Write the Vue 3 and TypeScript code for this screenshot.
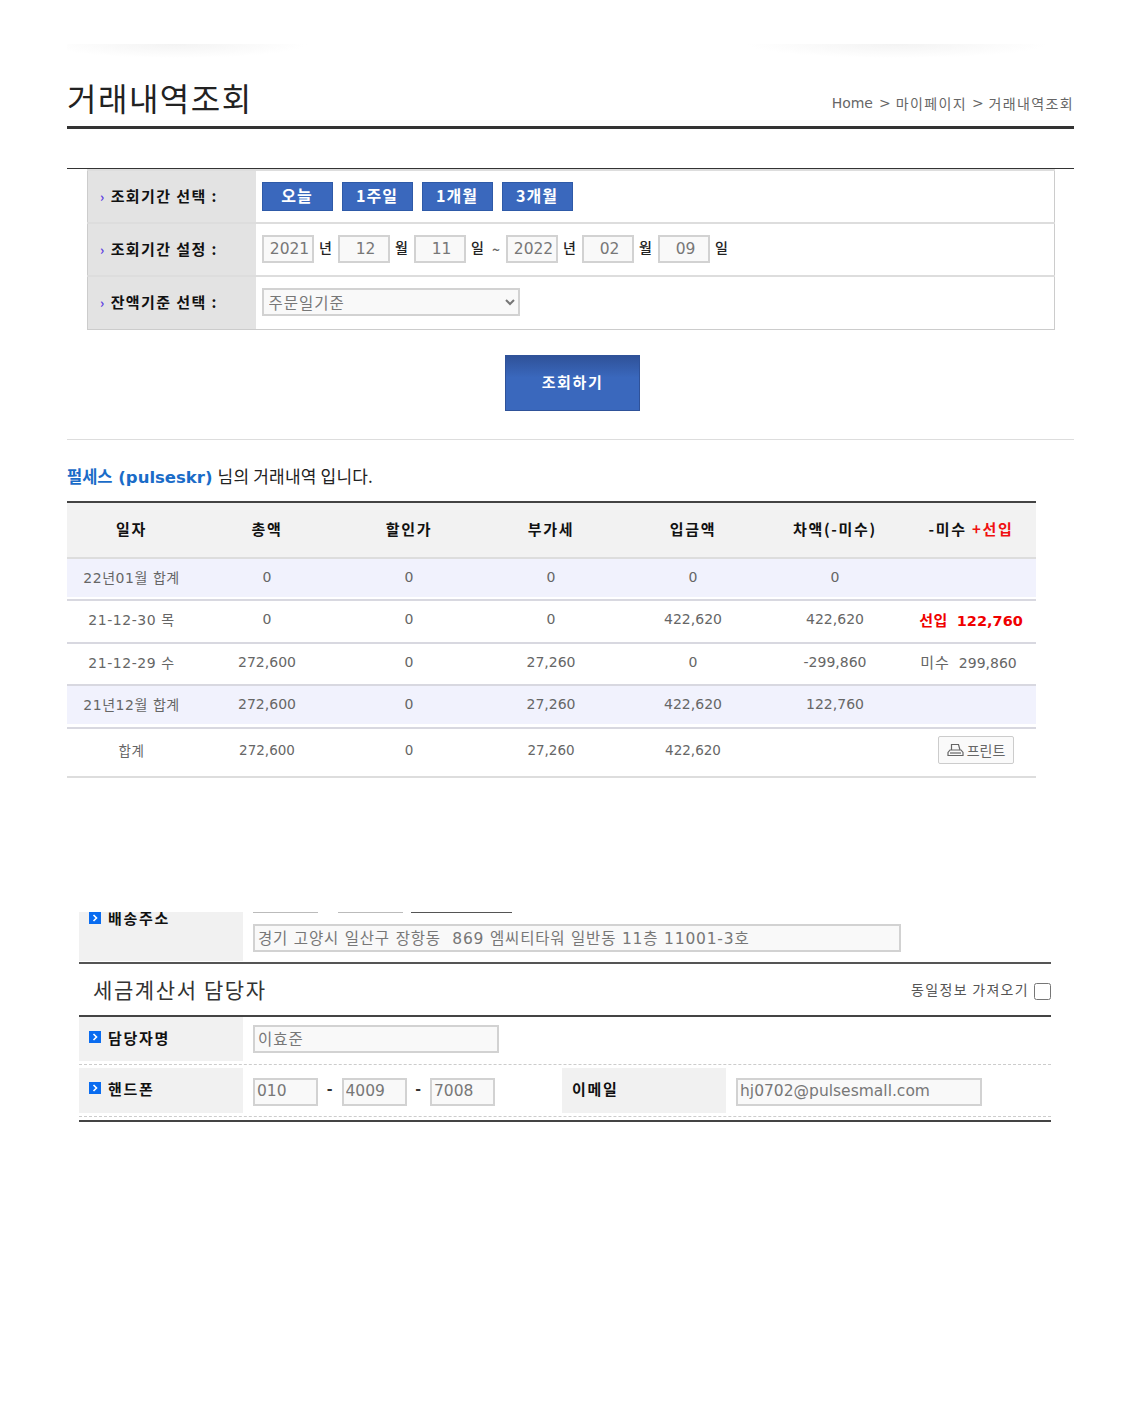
<script setup lang="ts">
interface Row {
  cells: string[];
  tint?: boolean;
  kind?: "adv" | "due" | "none" | "print";
  extra?: string;
}
const quick = ["오늘", "1주일", "1개월", "3개월"];
const heads = ["일자", "총액", "할인가", "부가세", "입금액", "차액(-미수)"];
const rows: Row[] = [
  { cells: ["22년01월 합계", "0", "0", "0", "0", "0"], tint: true, kind: "none" },
  { cells: ["21-12-30 목", "0", "0", "0", "422,620", "422,620"], kind: "adv", extra: "122,760" },
  { cells: ["21-12-29 수", "272,600", "0", "27,260", "0", "-299,860"], kind: "due", extra: "299,860" },
  { cells: ["21년12월 합계", "272,600", "0", "27,260", "422,620", "122,760"], tint: true, kind: "none" },
];
const totals = ["합계", "272,600", "0", "27,260", "422,620", ""];
</script>

<template>
  <div class="page">
    <div class="top-shadow"></div>
    <header class="head">
      <h1>거래내역조회</h1>
      <div class="crumb"><span>Home</span><i>&gt;</i><span>마이페이지</span><i>&gt;</i><span>거래내역조회</span></div>
    </header>

    <section class="search">
      <table class="form">
        <tr>
          <th><b class="arr">›</b>조회기간 선택 :</th>
          <td>
            <div class="quick"><button v-for="q in quick" :key="q" type="button">{{ q }}</button></div>
          </td>
        </tr>
        <tr>
          <th><b class="arr">›</b>조회기간 설정 :</th>
          <td>
            <div class="dates">
              <input class="d" value="2021" /><span>년</span>
              <input class="d" value="12" /><span>월</span>
              <input class="d" value="11" /><span>일</span><em>~</em>
              <input class="d" value="2022" /><span>년</span>
              <input class="d" value="02" /><span>월</span>
              <input class="d" value="09" /><span>일</span>
            </div>
          </td>
        </tr>
        <tr>
          <th><b class="arr">›</b>잔액기준 선택 :</th>
          <td>
            <select class="sel"><option>주문일기준</option></select>
          </td>
        </tr>
      </table>
      <div class="go"><button type="button">조회하기</button></div>
    </section>

    <p class="who"><strong>펄세스 (pulseskr)</strong> 님의 거래내역 입니다.</p>

    <table class="list">
      <colgroup>
        <col class="c1" /><col class="c2" /><col class="c2" /><col class="c2" /><col class="c2" /><col class="c2" /><col />
      </colgroup>
      <thead>
        <tr>
          <th v-for="h in heads" :key="h">{{ h }}</th>
          <th>-미수 <span class="red">+선입</span></th>
        </tr>
      </thead>
      <tbody>
        <tr v-for="r in rows" :key="r.cells[0]" :class="{ tint: r.tint }">
          <td v-for="(c, i) in r.cells" :key="i">{{ c }}</td>
          <td v-if="r.kind === 'adv'" class="adv"><span class="kw">선입</span>{{ r.extra }}</td>
          <td v-else-if="r.kind === 'due'" class="due"><span class="kw">미수</span>{{ r.extra }}</td>
          <td v-else></td>
        </tr>
        <tr class="total">
          <td v-for="(c, i) in totals" :key="i">{{ c }}</td>
          <td class="pc">
            <button class="print" type="button">
              <svg width="17" height="14" viewBox="0 0 17 14" fill="none" stroke="#666" stroke-width="1.2">
                <path d="M4.5 7V1.5h7l1.5 5.5" />
                <path d="M1 12.5V9.5L3 7h11l2 2.5v3z" />
                <path d="M3 10h11" />
              </svg>
              프린트
            </button>
          </td>
        </tr>
      </tbody>
    </table>

    <section class="lower">
      <div class="clip">
        <table class="info ship">
          <tr>
            <th><svg class="ico" viewBox="0 0 12 12"><rect width="12" height="12" fill="#0a6cf0" /><path d="M4.5 3l3 3-3 3" fill="none" stroke="#fff" stroke-width="1.6" /></svg>배송주소</th>
            <td>
              <div class="cut"><i class="g1"></i><i class="g2"></i><i class="g3"></i></div>
              <input class="f addr" value="경기 고양시 일산구 장항동  869 엠씨티타워 일반동 11층 11001-3호" />
            </td>
          </tr>
        </table>
      </div>

      <div class="sub">
        <h2>세금계산서 담당자</h2>
        <label class="same">동일정보 가져오기 <input type="checkbox" /></label>
      </div>

      <div class="people">
        <div class="line first">
          <div class="lab"><svg class="ico" viewBox="0 0 12 12"><rect width="12" height="12" fill="#0a6cf0" /><path d="M4.5 3l3 3-3 3" fill="none" stroke="#fff" stroke-width="1.6" /></svg>담당자명</div>
          <div class="val"><input class="f name ko" value="이효준" /></div>
        </div>
        <div class="line second">
          <div class="lab"><svg class="ico" viewBox="0 0 12 12"><rect width="12" height="12" fill="#0a6cf0" /><path d="M4.5 3l3 3-3 3" fill="none" stroke="#fff" stroke-width="1.6" /></svg>핸드폰</div>
          <div class="val phone">
            <input class="f tel" value="010" /><span>-</span>
            <input class="f tel" value="4009" /><span>-</span>
            <input class="f tel" value="7008" />
          </div>
          <div class="lab mail">이메일</div>
          <div class="val"><input class="f name" value="hj0702@pulsesmall.com" /></div>
        </div>
      </div>
    </section>
  </div>
</template>

<style>
html, body { margin: 0; background: #fff; }
</style>

<style scoped>
.page {
  width: 1127px;
  height: 1407px;
  overflow: hidden;
  font-family: "DejaVu Sans", "Noto Sans CJK KR", sans-serif;
  color: #666;
  font-size: 14px;
}
.top-shadow {
  margin: 44px 67px 0;
  height: 16px;
  background:
    radial-gradient(ellipse 130px 14px at 110px 0, #f3f3f3, transparent),
    radial-gradient(ellipse 150px 14px at 830px 0, #f3f3f3, transparent);
}
.head {
  margin-left: 67px;
  width: 1007px;
  height: 66px;
  border-bottom: 3px solid #333;
  display: flex;
  justify-content: space-between;
  align-items: flex-end;
  box-sizing: content-box;
}
.head h1 {
  margin: 0 0 6px;
  font: 400 32px/46px "Noto Sans CJK KR", sans-serif;
  color: #222;
  letter-spacing: 1.5px;
}
.crumb {
  margin-bottom: 13px;
  font-size: 14px;
  line-height: 20px;
  color: #666;
  display: flex;
  padding-right: 1px;
}
.crumb i { font-style: normal; margin: 0 5px 0 6px; }
.crumb span:not(:first-child) { font-family: "Noto Sans CJK KR", sans-serif; letter-spacing: 1.35px; margin-right: -1px; }
.search {
  margin: 39px 53px 0 67px;
  width: 1007px;
  border-top: 1px solid #333;
  border-bottom: 1px solid #ddd;
  padding-bottom: 28px;
}
.form {
  margin-left: 20px;
  width: 968px;
  border-collapse: collapse;
  border: 1px solid #ccc;
}
.form tr { height: 53px; }
.form th {
  width: 168px;
  box-sizing: border-box;
  background: #e3e3e3;
  border-top: 2px solid #ddd;
  text-align: left;
  padding: 0 0 3px 12px;
  font: 700 15px "Noto Sans CJK KR", sans-serif;
  color: #111;
  letter-spacing: 1.4px;
  white-space: nowrap;
}
.form td {
  border-top: 2px solid #ddd;
  padding: 0 0 0 6px;
  background: #fff;
}
.arr { color: #5a3be0; margin-right: 5px; font-size: 13px; font-weight: 700; }
.quick { display: flex; gap: 9px; }
.quick button {
  width: 71px;
  height: 29px;
  padding: 0 0 3px;
  background: #3a68bd;
  border: 1px solid #2e5aa8;
  color: #fff;
  font: 700 16px "Noto Sans CJK KR", sans-serif;
  letter-spacing: 1px;
}
.dates {
  display: flex;
  align-items: center;
  margin-bottom: 2px;
  color: #222;
  font: 500 14px "Noto Sans CJK KR", sans-serif;
}
.dates span { width: 24px; text-align: center; padding-bottom: 3px; flex: none; }
.dates em { font-style: normal; color: #666; width: 19px; margin-left: -3px; text-align: center; }
.d {
  width: 52px;
  height: 28px;
  flex: none;
  box-sizing: border-box;
  border: 2px solid #d2d2d2;
  background: #f9f9f9;
  color: #777;
  font: 15.5px "DejaVu Sans", sans-serif;
  text-align: center;
  padding: 0 0 0 4px;
  outline: none;
}
.sel {
  display: block;
  width: 258px;
  height: 28px;
  margin-bottom: 2px;
  box-sizing: border-box;
  border: 2px solid #d2d2d2;
  border-radius: 0;
  background-color: #f9f9f9;
  color: #777;
  font: 15.5px "Noto Sans CJK KR", sans-serif;
  letter-spacing: 1px;
  padding-left: 1px;
  outline: none;
}
.go { display: flex; justify-content: center; margin-top: 25px; padding-left: 4px; }
.go button {
  width: 135px;
  height: 56px;
  padding: 0 0 2px;
  background: linear-gradient(#2f5299, #3a68bd 40%, #3a68bd);
  border: 1px solid #2f5299;
  color: #fff;
  font: 700 15px "Noto Sans CJK KR", sans-serif;
  letter-spacing: 1.6px;
}
.who {
  margin: 23px 0 0 67px;
  height: 25px;
  font: 400 17px/25px "Noto Sans CJK KR", sans-serif;
  letter-spacing: 0.2px;
  color: #222;
}
.who strong {
  font-family: "DejaVu Sans", "Noto Sans CJK KR", sans-serif;
  font-size: 16.5px;
  font-weight: 700;
  letter-spacing: 0;
  color: #1a6cc8;
  margin-right: 1px;
}
.list {
  margin: 13px 0 0 67px;
  width: 969px;
  table-layout: fixed;
  border-collapse: collapse;
  border-top: 2px solid #444;
}
.c1 { width: 129px; }
.c2 { width: 142px; }
.list th {
  height: 52px;
  padding: 0 0 2px;
  background: #f2f2f2;
  border-bottom: 2px solid #ddd;
  font: 700 15px "Noto Sans CJK KR", sans-serif;
  color: #111;
  letter-spacing: 1.7px;
}
.list .red { color: #f01010; }
.list td {
  padding: 0 0 4px;
  text-align: center;
  border-bottom: 2px solid #d8d8e0;
  color: #666;
  font-size: 14px;
}
.list tbody tr { height: 43px; }
.list tbody tr:nth-child(1),
.list tbody tr:nth-child(3) { height: 42px; }
.list td:first-child { letter-spacing: 0.55px; }
.list .tint td { background: linear-gradient(#f1f2fd 0, #f1f2fd 38px, #fff 38px); }
.list tbody .total { height: 49px; }
.list .total td { font-size: 13.5px; border-bottom-color: #ddd; }
.list .total td.pc { padding: 0 0 4px 10px; }
.adv { color: #f00000 !important; font-weight: 700; font-size: 14.5px !important; }
.list .due { padding-right: 5px; }
.kw { font-family: "Noto Sans CJK KR", sans-serif; font-size: 15px; letter-spacing: 0.5px; margin-right: 9px; }
.due .kw { font-weight: 400; letter-spacing: 1px; }
.print {
  display: inline-flex;
  align-items: center;
  gap: 3px;
  width: 76px;
  height: 28px;
  justify-content: center;
  padding: 0;
  background: #fafafa;
  border: 1px solid #ccc;
  border-radius: 2px;
  color: #666;
  font: 14px "Noto Sans CJK KR", sans-serif;
}
.lower { margin: 134px 0 0 79px; width: 972px; }
.clip { height: 50px; overflow: hidden; border-bottom: 2px solid #555; }
.info { width: 972px; border-collapse: collapse; }
.info th {
  width: 164px;
  height: 49px;
  background: #f1f1f1;
  padding: 0 0 0 10px;
  box-sizing: border-box;
  text-align: left;
  vertical-align: top;
  font: 700 15px/12px "Noto Sans CJK KR", sans-serif;
  color: #111;
  letter-spacing: 1.7px;
}
.info td { padding: 0 0 0 10px; vertical-align: top; }
.cut { display: flex; height: 2px; }
.cut i { display: block; height: 1px; background: #bbb; }
.g1 { width: 65px; }
.g2 { width: 65px; margin-left: 20px; }
.g3 { width: 101px; margin-left: 8px; background: #555 !important; }
.ico { width: 12px; height: 12px; margin-right: 7px; vertical-align: top; }
.f {
  height: 28px;
  box-sizing: border-box;
  border: 2px solid #d2d2d2;
  background: #f9f9f9;
  color: #777;
  font: 15.5px "DejaVu Sans", "Noto Sans CJK KR", sans-serif;
  padding: 0 2px 2px;
  outline: none;
  display: block;
}
.addr { width: 648px; margin-top: 10px; padding-left: 3px; letter-spacing: 0.8px; }
.ko { padding-left: 3px; letter-spacing: 1px; }
.name { width: 246px; }
.tel { width: 65px; flex: none; }
.sub {
  height: 51px;
  border-bottom: 2px solid #444;
  display: flex;
  justify-content: space-between;
  align-items: center;
  padding-left: 14px;
}
.sub h2 {
  margin: 0;
  font: 400 21px/30px "Noto Sans CJK KR", sans-serif;
  color: #333;
  letter-spacing: 1.6px;
}
.same {
  display: flex;
  align-items: center;
  font: 400 14px "Noto Sans CJK KR", sans-serif;
  color: #555;
  letter-spacing: 1.3px;
  gap: 5px;
}
.same input {
  width: 17px;
  height: 17px;
  margin: 4px 0 0;
}
.people { border-bottom: 2px solid #444; padding-bottom: 3px; }
.line { display: flex; }
.first { height: 44px; padding-bottom: 3px; border-bottom: 1px dashed #ccc; }
.second { height: 45px; padding-top: 3px; padding-bottom: 3px; border-bottom: 1px dashed #ccc; }
.lab {
  width: 164px;
  flex: none;
  box-sizing: border-box;
  background: #f1f1f1;
  padding: 11px 0 0 10px;
  font: 700 15px/20px "Noto Sans CJK KR", sans-serif;
  color: #111;
  letter-spacing: 1.7px;
}
.lab .ico { margin-top: 3px; }
.val { padding: 8px 0 0 10px; }
.second .val { padding-top: 10px; }
.phone { display: flex; width: 319px; box-sizing: border-box; }
.phone span { width: 23.5px; text-align: center; color: #333; font-weight: 700; line-height: 22px; }
.lab.mail { width: 164px; }
</style>
